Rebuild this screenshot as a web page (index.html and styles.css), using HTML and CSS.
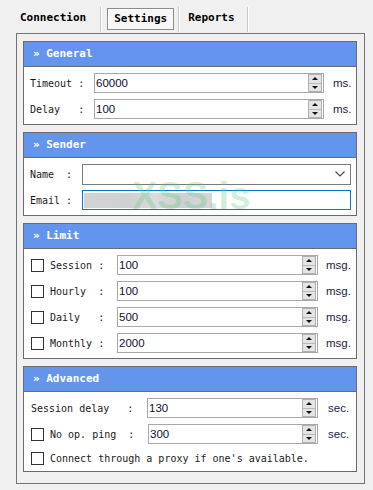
FILE: index.html
```html
<!DOCTYPE html>
<html lang="en">
<head>
    <meta charset="UTF-8">
    <title>Settings</title>
    <link rel="stylesheet" href="styles.css">
</head>
<body>
    <div class="tabs">
        <span class="tab tab-first">Connection</span>
        <span class="sep"></span>
        <span class="tab tab-active">Settings</span>
        <span class="sep"></span>
        <span class="tab tab-last">Reports</span>
        <span class="sep"></span>
    </div>

    <div class="panel">
        <!-- General -->
        <div class="group general">
            <div class="group-title">» General</div>
            <div class="group-body">
                <div class="row">
                    <span class="label">Timeout :</span>
                    <div class="spin"><span class="value">60000</span><span class="arrows"><i class="up"></i><i class="down"></i></span></div>
                    <span class="unit">ms.</span>
                </div>
                <div class="row">
                    <span class="label">Delay   :</span>
                    <div class="spin"><span class="value">100</span><span class="arrows"><i class="up"></i><i class="down"></i></span></div>
                    <span class="unit">ms.</span>
                </div>
            </div>
        </div>

        <!-- Sender -->
        <div class="group sender">
            <div class="group-title">» Sender</div>
            <div class="group-body">
                <div class="row">
                    <span class="label">Name  :</span>
                    <div class="select">
                        <svg width="10" height="6" viewBox="0 0 10 6"><path d="M0.5 0.5 L5 5 L9.5 0.5" fill="none" stroke="#444" stroke-width="1.1"/></svg>
                    </div>
                </div>
                <div class="row">
                    <span class="label">Email :</span>
                    <div class="email"><span class="redacted"></span></div>
                </div>
            </div>
            <span class="watermark">XSS.is</span>
        </div>

        <!-- Limit -->
        <div class="group limit">
            <div class="group-title">» Limit</div>
            <div class="group-body">
                <div class="row">
                    <span class="check"></span>
                    <span class="label">Session :</span>
                    <div class="spin"><span class="value">100</span><span class="arrows"><i class="up"></i><i class="down"></i></span></div>
                    <span class="unit">msg.</span>
                </div>
                <div class="row">
                    <span class="check"></span>
                    <span class="label">Hourly  :</span>
                    <div class="spin"><span class="value">100</span><span class="arrows"><i class="up"></i><i class="down"></i></span></div>
                    <span class="unit">msg.</span>
                </div>
                <div class="row">
                    <span class="check"></span>
                    <span class="label">Daily   :</span>
                    <div class="spin"><span class="value">500</span><span class="arrows"><i class="up"></i><i class="down"></i></span></div>
                    <span class="unit">msg.</span>
                </div>
                <div class="row">
                    <span class="check"></span>
                    <span class="label">Monthly :</span>
                    <div class="spin"><span class="value">2000</span><span class="arrows"><i class="up"></i><i class="down"></i></span></div>
                    <span class="unit">msg.</span>
                </div>
            </div>
        </div>

        <!-- Advanced -->
        <div class="group advanced">
            <div class="group-title">» Advanced</div>
            <div class="group-body">
                <div class="row">
                    <span class="label label-wide">Session delay   :</span>
                    <div class="spin"><span class="value">130</span><span class="arrows"><i class="up"></i><i class="down"></i></span></div>
                    <span class="unit">sec.</span>
                </div>
                <div class="row">
                    <span class="check"></span>
                    <span class="label">No op. ping  :</span>
                    <div class="spin"><span class="value">300</span><span class="arrows"><i class="up"></i><i class="down"></i></span></div>
                    <span class="unit">sec.</span>
                </div>
                <div class="row row-short">
                    <span class="check"></span>
                    <span class="label">Connect through a proxy if one's available.</span>
                </div>
            </div>
        </div>
    </div>
</body>
</html>
```

FILE: styles.css
```css
body{
    margin: 0;
    background: #f0f0f0;
    font-family: 'DejaVu Sans Mono', monospace;
    color: #1a1a1a;
    width: 373px;
    height: 490px;
    overflow: hidden;
}

/* tabs */
.tabs{
    display: flex;
    align-items: flex-start;
    height: 33px;
    padding-left: 20px;
    padding-top: 7px;
    box-sizing: border-box;
}
.tab{
    font-weight: bold;
    font-size: 11px;
    line-height: 20px;
    margin-top: 1px;
    color: #000;
}
.tab-first{
    margin-right: 14px;
}
.tab-active{
    margin-left: 5px;
    margin-right: 4px;
    padding: 0 6px;
    border: 1px solid #8c8c8c;
    background: #f7f7f7;
    box-shadow: inset 1px 1px 0 #fff;
}
.tab-last{
    margin-left: 8px;
    margin-right: 12px;
}
.sep{
    width: 1px;
    height: 25px;
    background: #c9c9c9;
    border-right: 1px solid #fff;
}

/* main panel */
.panel{
    margin-left: 16px;
    width: 349px;
    box-sizing: border-box;
    border: 1px solid #737373;
    padding: 7px 7px 11px 6px;
    display: flex;
    flex-direction: column;
    gap: 7px;
}
.group{
    position: relative;
    border: 1px solid #6b6b6b;
    background: #fff;
}
.group-title{
    height: 24px;
    line-height: 24px;
    background: #6495ed;
    border-bottom: 1px solid #6b6b6b;
    color: #fff;
    font-weight: bold;
    font-size: 11px;
    padding-left: 9px;
}
.group-body{
    display: flex;
    flex-direction: column;
    gap: 6px;
    padding: 6px 6px 5px 6px;
}
.limit .group-body,
.advanced .group-body{
    padding-left: 7px;
}
.row{
    display: flex;
    align-items: center;
    height: 20px;
}
.row-short{
    height: 16px;
}
.label{
    white-space: pre;
    font-size: 10px;
    color: #1a1a1a;
}
.general .label{
    width: 64px;
}
.sender .label{
    width: 52px;
}
.limit .label{
    width: 67px;
}
.advanced .label{
    width: 98px;
}
.advanced .label-wide{
    width: 116px;
}
.row-short .label{
    width: auto;
}
.check{
    width: 13px;
    height: 13px;
    box-sizing: border-box;
    border: 1px solid #333;
    background: #fff;
    margin-right: 6px;
    flex-shrink: 0;
}

/* spin boxes */
.spin{
    flex: 1;
    height: 20px;
    box-sizing: border-box;
    border: 1px solid #a8a8a8;
    background: #fff;
    display: flex;
    align-items: stretch;
}
.value{
    flex: 1;
    padding-left: 1px;
    font-family: 'Liberation Sans', Arial, sans-serif;
    font-size: 11.5px;
    line-height: 18px;
    color: #101030;
}
.arrows{
    width: 14px;
    margin-right: 1px;
    display: flex;
    flex-direction: column;
    box-sizing: border-box;
    border: 1px solid #b0b0b0;
    background: #e4e4e4;
}
.arrows i{
    flex: 1;
    display: flex;
    align-items: center;
    justify-content: center;
}
.arrows i.up{
    border-bottom: 1px solid #b8b8b8;
}
.arrows i.up::after{
    content: "";
    border-left: 3px solid transparent;
    border-right: 3px solid transparent;
    border-bottom: 3px solid #111;
}
.arrows i.down::after{
    content: "";
    border-left: 3px solid transparent;
    border-right: 3px solid transparent;
    border-top: 3px solid #111;
}
.unit{
    font-family: 'Liberation Sans', Arial, sans-serif;
    font-size: 11.5px;
    color: #1c2244;
    width: 26px;
    padding-left: 9px;
    box-sizing: border-box;
}
.limit .unit,
.advanced .unit{
    width: 32px;
    padding-left: 8px;
}
.advanced .unit{
    padding-left: 10px;
}

/* sender fields */
.select{
    flex: 1;
    height: 21px;
    margin-right: -1px;
    box-sizing: border-box;
    border: 1px solid #7a7a7a;
    background: #fff;
    display: flex;
    align-items: center;
    justify-content: flex-end;
    padding-right: 5px;
}
.email{
    flex: 1;
    height: 20px;
    margin-right: -1px;
    box-sizing: border-box;
    border: 1px solid #0078d7;
    background: #fff;
    display: flex;
    align-items: center;
    padding-left: 1px;
}
.redacted{
    width: 128px;
    height: 15px;
    background: linear-gradient(90deg, #d3d3d6 0%, #cfd0d3 35%, #dadbdc 55%, #d0d0d3 75%, #d6d6d8 100%);
}
.watermark{
    position: absolute;
    left: 108px;
    top: 44px;
    font-family: 'Liberation Sans', Arial, sans-serif;
    font-weight: bold;
    font-size: 38px;
    line-height: 1;
    color: rgba(90, 200, 120, 0.28);
    pointer-events: none;
}
```
